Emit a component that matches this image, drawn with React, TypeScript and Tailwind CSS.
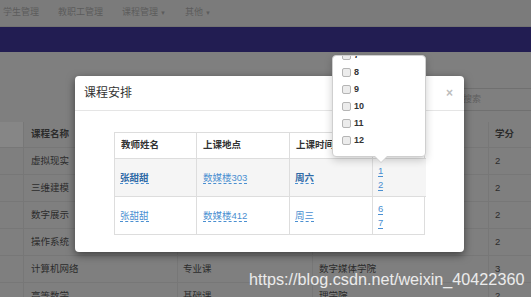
import { Fragment } from 'react';

const font = { fontFamily: '"Liberation Sans", "Noto Sans CJK SC", sans-serif' };

const navItems = [
  { label: '学生管理', caret: false },
  { label: '教职工管理', caret: false },
  { label: '课程管理', caret: true },
  { label: '其他', caret: true },
];

// background table rows (behind the modal)
const courseRows = [
  { name: '虚拟现实', type: '', college: '', credit: '2' },
  { name: '三维建模', type: '', college: '', credit: '2' },
  { name: '数字展示', type: '', college: '', credit: '2' },
  { name: '操作系统', type: '', college: '', credit: '2' },
  { name: '计算机网络', type: '专业课', college: '数字媒体学院', credit: '3' },
  { name: '高等数学', type: '基础课', college: '理学院', credit: '2' },
];

const scheduleRows = [
  { teacher: '张甜甜', place: '数媒楼303', day: '周六', slots: ['1', '2'], strong: true },
  { teacher: '张甜甜', place: '数媒楼412', day: '周三', slots: ['6', '7'], strong: false },
];

const slotOptions = ['7', '8', '9', '10', '11', '12'];

const EditLink = ({ text, strong }: { text: string; strong?: boolean }) => (
  <span
    className={`border-b border-dashed border-[#4a8fd1] leading-[11px] ${
      strong ? 'font-bold text-[#2f6aa6]' : 'text-[#4a8fd1]'
    }`}
  >
    {text}
  </span>
);

const App = () => {
  return (
    <div className="relative w-[531px] h-[297px] overflow-hidden bg-[#7f7f7f]" style={font}>
      {/* top nav */}
      <div className="flex items-center h-[27px] bg-[#7b7b7b] border-b border-[#727272] pl-[3px] gap-[19px] text-[9px] text-[#5c5c5c]">
        {navItems.map((item) => (
          <span key={item.label} className="flex items-center gap-[2px]">
            {item.label}
            {item.caret && <span className="text-[6px]">▼</span>}
          </span>
        ))}
      </div>

      {/* purple band */}
      <div className="h-[25px] bg-[#221d52]" />

      {/* search */}
      <div className="pt-[36px] pl-[441px]">
        <div className="w-[100px] h-[23px] border border-[#707070] rounded-[3px] flex items-center pl-[21px] text-[9px] text-[#5e5e5e]">
          搜索
        </div>
      </div>

      {/* course table */}
      <div className="mt-[11px] grid grid-cols-[24px_154px_135px_176px_60px] text-[9.5px] text-[#2c2c2c]">
        <div className="h-[25px] bg-[#868686] border-r border-[#777]" />
        <div className="h-[25px] flex items-center pl-[7px] font-bold border-r border-[#777]">课程名称</div>
        <div className="h-[25px] border-r border-[#777]" />
        <div className="h-[25px] border-r border-[#777]" />
        <div className="h-[25px] flex items-center pl-[6px] font-bold">学分</div>
        {courseRows.map((row) => (
          <Fragment key={row.name}>
            <div className="h-[27px] border-t border-r border-[#777]" />
            <div className="h-[27px] flex items-center pl-[7px] border-t border-r border-[#777]">{row.name}</div>
            <div className="h-[27px] flex items-center pl-[5px] border-t border-r border-[#777]">{row.type}</div>
            <div className="h-[27px] flex items-center pl-[6px] border-t border-r border-[#777]">{row.college}</div>
            <div className="h-[27px] flex items-center pl-[6px] border-t border-[#777]">{row.credit}</div>
          </Fragment>
        ))}
      </div>

      {/* modal */}
      <div className="absolute left-[75px] top-[76px] w-[389px] h-[176px] bg-white rounded-[4px] shadow-[0_3px_9px_rgba(0,0,0,0.5)]">
        <div className="h-[35px] flex items-center justify-between pl-[9px] pr-[11px] border-b border-[#e5e5e5]">
          <span className="text-[12px] text-[#333]">课程安排</span>
          <span className="text-[12px] text-[#bdbdbd] font-bold">×</span>
        </div>
        <div className="pt-[21px] flex justify-center">
          <div className="w-[311px] grid grid-cols-[82px_93px_83px_53px] border border-[#ddd] text-[9.5px]">
            {['教师姓名', '上课地点', '上课时间', ''].map((h, i) => (
              <div
                key={i}
                className={`h-[25px] flex items-center pl-[6px] font-bold text-[#333] ${i < 3 ? 'border-r border-[#ddd]' : ''}`}
              >
                {h}
              </div>
            ))}
            {scheduleRows.map((row, r) => (
              <Fragment key={r}>
                <div className={`h-[38px] flex items-center pl-[5px] border-t border-r border-[#ddd] ${r === 0 ? 'bg-[#f5f5f5]' : 'h-[36px]'}`}>
                  <EditLink text={row.teacher} strong={row.strong} />
                </div>
                <div className={`h-[38px] flex items-center pl-[6px] border-t border-r border-[#ddd] ${r === 0 ? 'bg-[#f5f5f5]' : 'h-[36px]'}`}>
                  <EditLink text={row.place} />
                </div>
                <div className={`h-[38px] flex items-center pl-[5px] border-t border-r border-[#ddd] ${r === 0 ? 'bg-[#f5f5f5]' : 'h-[36px]'}`}>
                  <EditLink text={row.day} strong={row.strong} />
                </div>
                <div className={`h-[38px] flex flex-col justify-center items-start gap-[2px] pl-[5px] border-t border-[#ddd] ${r === 0 ? 'bg-[#f5f5f5]' : 'h-[36px]'}`}>
                  {row.slots.map((s) => (
                    <EditLink key={s} text={s} />
                  ))}
                </div>
              </Fragment>
            ))}
          </div>
        </div>
      </div>

      {/* checklist popover */}
      <div className="absolute left-[332px] top-[55px] w-[94px] h-[102px] bg-white border border-[#cfcfcf] rounded-[4px] shadow-[0_3px_8px_rgba(0,0,0,0.2)]">
        <div className="h-full overflow-hidden rounded-[4px]">
          <div className="-mt-[9px] pl-[9px]">
            {slotOptions.map((s) => (
              <div key={s} className="h-[17px] flex items-center gap-[3px] text-[9px] font-bold text-[#333]">
                <span className="w-[9px] h-[9px] rounded-[2px] border border-[#b5b5b5] bg-[#ececec]" />
                {s}
              </div>
            ))}
          </div>
        </div>
        <div className="absolute left-[41px] -bottom-[7px] w-0 h-0 border-l-[7px] border-r-[7px] border-t-[7px] border-l-transparent border-r-transparent border-t-[#cfcfcf]" />
        <div className="absolute left-[42px] -bottom-[6px] w-0 h-0 border-l-[6px] border-r-[6px] border-t-[6px] border-l-transparent border-r-transparent border-t-white" />
      </div>

      {/* watermark */}
      <div className="absolute left-[249px] top-[267px] text-[16.2px] text-white/85">
        https://blog.csdn.net/weixin_40422360
      </div>
    </div>
  );
};

export default App;
